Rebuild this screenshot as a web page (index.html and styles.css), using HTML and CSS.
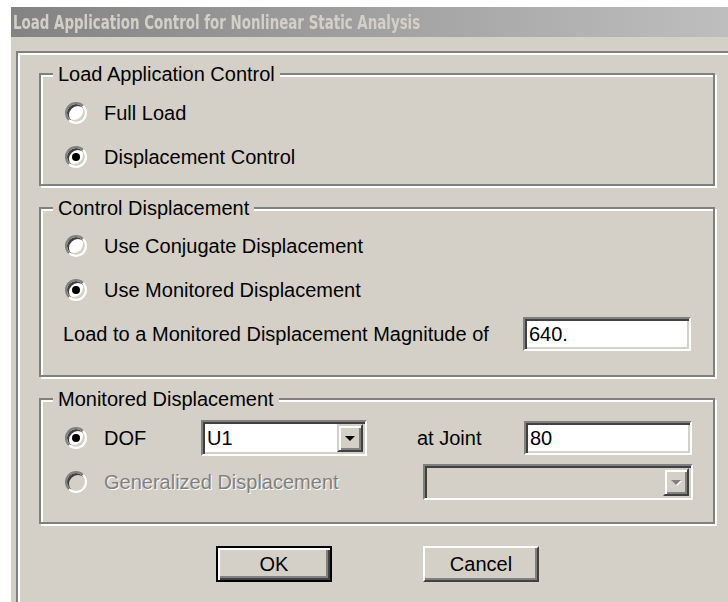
FILE: index.html
```html
<!DOCTYPE html>
<html lang="en">
<head>
<meta charset="utf-8">
<title>Load Application Control for Nonlinear Static Analysis</title>
<link rel="stylesheet" href="styles.css">
</head>
<body>
<div class="window">
  <div class="titlebar"><span class="caption">Load Application Control for Nonlinear Static Analysis</span></div>
  <div class="client">
    <div class="frame">

      <div class="group g1">
        <div class="group-title">Load Application Control</div>
        <div class="row"><span class="radio"></span><span class="label">Full Load</span></div>
        <div class="row"><span class="radio checked"></span><span class="label">Displacement Control</span></div>
      </div>

      <div class="group g2">
        <div class="group-title">Control Displacement</div>
        <div class="row"><span class="radio"></span><span class="label">Use Conjugate Displacement</span></div>
        <div class="row"><span class="radio checked"></span><span class="label">Use Monitored Displacement</span></div>
        <div class="row magnitude">
          <span class="label w-magnitude">Load to a Monitored Displacement Magnitude of</span>
          <div class="field w-field">640.</div>
        </div>
      </div>

      <div class="group g3">
        <div class="group-title">Monitored Displacement</div>
        <div class="row">
          <span class="radio checked"></span>
          <span class="label w-dof">DOF</span>
          <div class="combo w-dofcombo">
            <span class="combo-value">U1</span>
            <span class="combo-btn"><span class="arrow"></span></span>
          </div>
          <span class="label w-joint">at Joint</span>
          <div class="field w-field">80</div>
        </div>
        <div class="row">
          <span class="radio disabled"></span>
          <span class="label disabled w-general">Generalized Displacement</span>
          <div class="combo disabled w-gencombo">
            <span class="combo-value"></span>
            <span class="combo-btn"><span class="arrow"></span></span>
          </div>
        </div>
      </div>

      <div class="actions">
        <button class="button default" type="button">OK</button>
        <button class="button" type="button">Cancel</button>
      </div>

    </div>
  </div>
</div>
</body>
</html>
```

FILE: styles.css
```css
html, body {
  margin: 0;
  padding: 0;
  background: #ffffff;
  overflow: hidden;
}

body {
  font-family: "Liberation Sans", Arial, sans-serif;
  font-size: 20px;
  color: #000000;
}

/* dialog window */
.window {
  margin: 7px 0 0 11px;
  height: 595px;
  background: #d4d0c8;
  overflow: hidden;
}

.titlebar {
  height: 30px;
  line-height: 30px;
  padding-left: 2px;
  background: linear-gradient(to right, #838383, #bebebe);
  color: #d4d0c8;
  white-space: nowrap;
  overflow: hidden;
}

/* narrow bold caption face */
.caption {
  display: inline-block;
  font-family: "DejaVu Sans Condensed", "DejaVu Sans", sans-serif;
  font-weight: bold;
  font-size: 19px;
  transform: scaleX(0.784);
  transform-origin: left center;
}

.client {
  padding: 14px 0 0 5px;
}

/* etched outer frame that runs past the window edge */
.frame {
  border-top: 2px solid #808080;
  border-left: 2px solid #808080;
  box-shadow: inset 2px 2px 0 #ffffff;
  padding: 20px 0 0 21px;
  min-height: 600px;
}

/* group boxes */
.group {
  width: 676px;
  box-sizing: border-box;
  border: 2px solid #808080;
  box-shadow: inset 2px 2px 0 #ffffff, 2px 2px 0 #ffffff;
}

.group + .group {
  margin-top: 21px;
}

.g1 { padding-bottom: 5px; }
.g2 { padding-bottom: 19px; }
.g3 { padding-bottom: 18px; }

.group-title {
  width: fit-content;
  height: 20px;
  line-height: 20px;
  margin: -11px 0 7px 12px;
  padding: 0 5px;
  background: #d4d0c8;
  white-space: nowrap;
}

.g2 .group-title { margin-bottom: 6px; }

.row {
  height: 44px;
  display: flex;
  align-items: center;
  padding-left: 24px;
}

.row.magnitude {
  padding-left: 22px;
}

.label {
  line-height: 20px;
  white-space: nowrap;
  flex: none;
}

.label.disabled {
  color: #808080;
  text-shadow: 1px 1px 0 #ffffff;
}

.w-magnitude { width: 460px; }
.w-dof { width: 97px; }
.w-joint { width: 107px; margin-left: 50px; }
.w-general { width: 319px; }

/* radio buttons */
.radio {
  flex: none;
  width: 22px;
  height: 22px;
  box-sizing: border-box;
  border-radius: 50%;
  border: 2px solid;
  border-color: #808080 #ffffff #ffffff #808080;
  background: #ffffff;
  box-shadow: inset 2px 2px 0 #404040, inset -2px -2px 0 #d4d0c8;
  display: flex;
  align-items: center;
  justify-content: center;
  margin-right: 17px;
}

.radio.checked::after {
  content: "";
  width: 8px;
  height: 8px;
  border-radius: 50%;
  background: #000000;
}

.radio.disabled {
  background: #d4d0c8;
}

/* sunken edit fields */
.field {
  flex: none;
  height: 34px;
  box-sizing: border-box;
  border: 2px solid;
  border-color: #808080 #ffffff #ffffff #808080;
  box-shadow: inset 2px 2px 0 #404040, inset -2px -2px 0 #d4d0c8;
  background: #ffffff;
  padding-left: 4px;
  line-height: 30px;
  white-space: nowrap;
}

.w-field { width: 168px; }

/* drop-down lists */
.combo {
  flex: none;
  height: 36px;
  box-sizing: border-box;
  border: 2px solid;
  border-color: #808080 #ffffff #ffffff #808080;
  box-shadow: inset 2px 2px 0 #404040, inset -2px -2px 0 #d4d0c8;
  background: #ffffff;
  padding: 2px;
  display: flex;
}

.combo.disabled {
  background: #d4d0c8;
}

.w-dofcombo { width: 166px; }
.w-gencombo { width: 270px; }

.combo-value {
  flex: 1;
  padding-left: 2px;
  line-height: 28px;
}

.combo-btn {
  flex: none;
  width: 26px;
  box-sizing: border-box;
  border: 2px solid;
  border-color: #d4d0c8 #404040 #404040 #d4d0c8;
  box-shadow: inset 2px 2px 0 #ffffff, inset -2px -2px 0 #808080;
  background: #d4d0c8;
  display: flex;
  align-items: center;
  justify-content: center;
}

.arrow {
  width: 0;
  height: 0;
  border-left: 5px solid transparent;
  border-right: 5px solid transparent;
  border-top: 5px solid #000000;
  margin-top: 1px;
}

.combo.disabled .arrow {
  border-top-color: #808080;
  filter: drop-shadow(1px 1px 0 #ffffff);
}

/* push buttons */
.actions {
  display: flex;
  gap: 91px;
  margin-top: 22px;
  padding-left: 177px;
}

.button {
  width: 116px;
  height: 36px;
  box-sizing: border-box;
  margin: 0;
  padding: 0;
  border: 2px solid;
  border-color: #ffffff #404040 #404040 #ffffff;
  box-shadow: inset -2px -2px 0 #808080;
  background: #d4d0c8;
  font-family: "Liberation Sans", Arial, sans-serif;
  font-size: 20px;
  color: #000000;
  line-height: 20px;
}

.button.default {
  border-color: #000000;
  box-shadow: inset 2px 2px 0 #ffffff, inset -2px -2px 0 #404040, inset -4px -4px 0 #808080;
}
```
